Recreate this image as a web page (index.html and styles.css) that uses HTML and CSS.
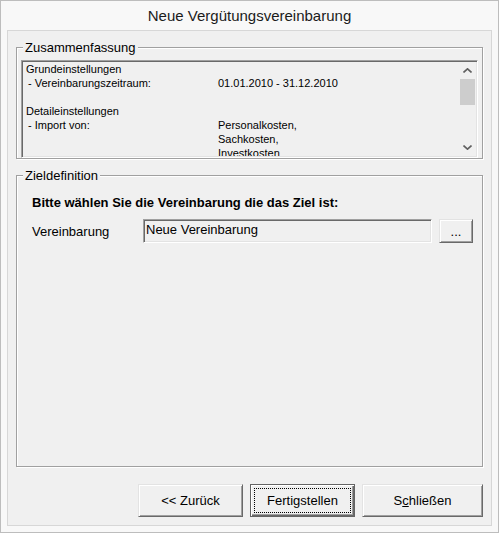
FILE: index.html
```html
<!DOCTYPE html>
<html lang="de">
<head>
  <meta charset="UTF-8" />
  <title>Neue Vergütungsvereinbarung</title>
  <link rel="stylesheet" href="styles.css">
</head>
<body>
  <div class="window">
    <div class="titlebar">Neue Vergütungsvereinbarung</div>

    <div class="client">
      <fieldset class="group">
        <legend>Zusammenfassung</legend>
        <div class="listbox">
          <div class="list-content">
            <div class="row head">Grundeinstellungen</div>
            <div class="row">
              <span class="key">- Vereinbarungszeitraum:</span>
              <span>01.01.2010 - 31.12.2010</span>
            </div>
            <div class="row">&nbsp;</div>
            <div class="row head">Detaileinstellungen</div>
            <div class="row">
              <span class="key">- Import von:</span>
              <span>Personalkosten,<br>Sachkosten,<br>Investkosten</span>
            </div>
          </div>
          <div class="scrollbar">
            <span class="arrow">
              <svg width="9" height="5" viewBox="0 0 9 5"><polyline points="0.5,4.5 4.5,0.8 8.5,4.5" fill="none" stroke="#606060" stroke-width="1.6"/></svg>
            </span>
            <span class="thumb"></span>
            <span class="track"></span>
            <span class="arrow">
              <svg width="9" height="5" viewBox="0 0 9 5"><polyline points="0.5,0.5 4.5,4.2 8.5,0.5" fill="none" stroke="#606060" stroke-width="1.6"/></svg>
            </span>
          </div>
        </div>
      </fieldset>

      <fieldset class="group target">
        <legend>Zieldefinition</legend>
        <div class="prompt">Bitte wählen Sie die Vereinbarung die das Ziel ist:</div>
        <div class="field-row">
          <label class="field-label">Vereinbarung</label>
          <div class="textbox">Neue Vereinbarung</div>
          <button class="btn browse">...</button>
        </div>
      </fieldset>

      <div class="buttons">
        <button class="btn">&lt;&lt; Zurück</button>
        <button class="btn default"><span class="focus">Fertigstellen</span></button>
        <button class="btn wide">S<u>c</u>hließen</button>
      </div>
    </div>
  </div>
</body>
</html>
```

FILE: styles.css
```css
body {
  margin: 0;
  background: #fff;
  font-family: 'Liberation Sans', Arial, sans-serif;
  font-size: 13px;
  color: #000;
}
.window {
  width: 499px;
  height: 533px;
  box-sizing: border-box;
  border: 1px solid #bdbdbd;
  background: #f8f8f8;
  display: flex;
  flex-direction: column;
}
.titlebar {
  height: 29px;
  line-height: 29px;
  text-align: center;
  font-size: 15px;
  color: #1b1b1b;
}
.client {
  flex: 1;
  margin: 0 6px 6px;
  border: 1px solid #d7d7d7;
  background: #f0f0f0;
  padding: 9px 8px 8px;
  display: flex;
  flex-direction: column;
}

/* group boxes */
.group {
  margin: 0;
  padding: 0;
  min-width: 0;
  border: 1px solid #a0a0a0;
  box-shadow: inset 1px 1px 0 #fff, 1px 1px 0 #fff;
}
.group legend {
  margin-left: 6px;
  padding: 0 2px;
  line-height: 15px;
  background: #f0f0f0;
}
.group.target {
  flex: 1;
  margin-top: 9px;
}

/* summary list */
.listbox {
  margin: 5px 4px 0;
  height: 98px;
  box-sizing: border-box;
  border: 1px solid;
  border-color: #a0a0a0 #fff #fff #a0a0a0;
  box-shadow: inset 1px 1px 0 #696969, inset -1px -1px 0 #e3e3e3;
  padding: 1px;
  display: flex;
  overflow: hidden;
}
.list-content {
  flex: 1;
  padding-left: 2px;
  font-size: 11px;
  line-height: 14px;
  overflow: hidden;
}
.row {
  display: grid;
  grid-template-columns: 192px 1fr;
  padding-left: 1px;
}
.row.head {
  display: block;
}
.key {
  padding-left: 2px;
}
.scrollbar {
  width: 17px;
  display: flex;
  flex-direction: column;
  align-items: center;
}
.arrow {
  height: 17px;
  display: flex;
  align-items: center;
  justify-content: center;
}
.arrow svg {
  display: block;
}
.thumb {
  width: 15px;
  height: 26px;
  background: #cdcdcd;
}
.track {
  flex: 1;
}

/* target */
.prompt {
  margin: 12px 0 0 15px;
  font-weight: bold;
  line-height: 15px;
}
.field-row {
  margin: 9px 0 0 15px;
  display: flex;
  align-items: center;
  height: 24px;
}
.field-label {
  width: 111px;
  line-height: 15px;
}
.textbox {
  width: 289px;
  height: 24px;
  box-sizing: border-box;
  border: 1px solid;
  border-color: #a0a0a0 #fff #fff #a0a0a0;
  box-shadow: inset 1px 1px 0 #696969, inset -1px -1px 0 #e3e3e3;
  padding: 2px 2px 0;
  line-height: 15px;
}

/* buttons */
.btn {
  font-family: inherit;
  font-size: 13px;
  color: #000;
  background: #f0f0f0;
  border: 1px solid;
  border-color: #e3e3e3 #696969 #696969 #e3e3e3;
  box-shadow: inset 1px 1px 0 #fff, inset -1px -1px 0 #a0a0a0;
  padding: 0;
  box-sizing: border-box;
  line-height: 15px;
}
.browse {
  width: 34px;
  height: 24px;
  margin-left: 7px;
}
.buttons {
  margin-top: 17px;
  display: flex;
  justify-content: flex-end;
  gap: 7px;
}
.buttons .btn {
  width: 105px;
  height: 33px;
}
.buttons .btn.wide {
  width: 121px;
}
.btn.default {
  border: 1px solid #646464;
  box-shadow: inset 1px 1px 0 #fff, inset -1px -1px 0 #696969, inset -2px -2px 0 #a0a0a0;
  display: flex;
  padding: 3px;
}
.focus {
  flex: 1;
  border: 1px dotted #000;
  display: flex;
  align-items: center;
  justify-content: center;
}
```
